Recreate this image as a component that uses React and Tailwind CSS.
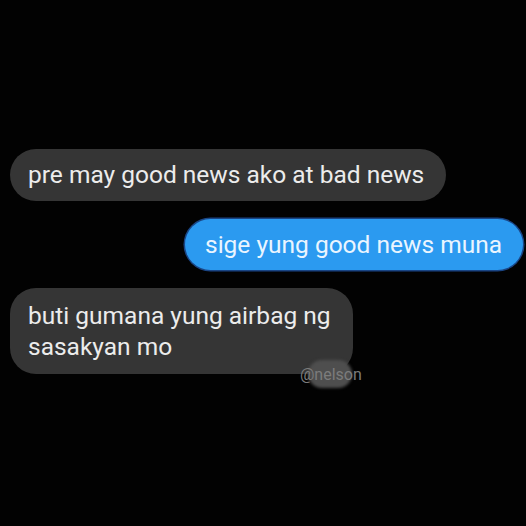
export default function App() {
  return (
    <div className="w-[526px] h-[526px] bg-[#020202] overflow-hidden font-['Roboto',sans-serif]">
      <div className="flex flex-col pt-[149px] pl-[10px] pr-[3px]">
        <div className="self-start rounded-full bg-[#353535] text-[#ececec] text-[24.5px] leading-[52px] h-[52px] pl-[18px] pr-[22px]">
          pre may good news ako at bad news
        </div>
        <div className="self-end mt-[18px] rounded-full bg-[#2b9af0] text-[#eaf5ff] text-[24.5px] leading-[51px] h-[51px] pl-[20px] pr-[21px] shadow-[0_0_0_1.5px_#1a4585]">
          sige yung good news muna
        </div>
        <div className="relative self-start mt-[18px] w-[343px] rounded-[26px] bg-[#353535] text-[#ececec] text-[24.5px] leading-[31px] pl-[18px] pr-[10px] pt-[12px] pb-[12px]">
          buti gumana yung airbag ng sasakyan mo
          <div className="absolute left-[298px] top-[72px] w-[44px] h-[28px] rounded-full bg-[#4e4e4e] blur-[1.5px]" />
          <span className="absolute left-[290px] top-[77px] text-[16px] leading-[20px] text-[#7c7c7c]">@nelson</span>
        </div>
      </div>
    </div>
  );
}
